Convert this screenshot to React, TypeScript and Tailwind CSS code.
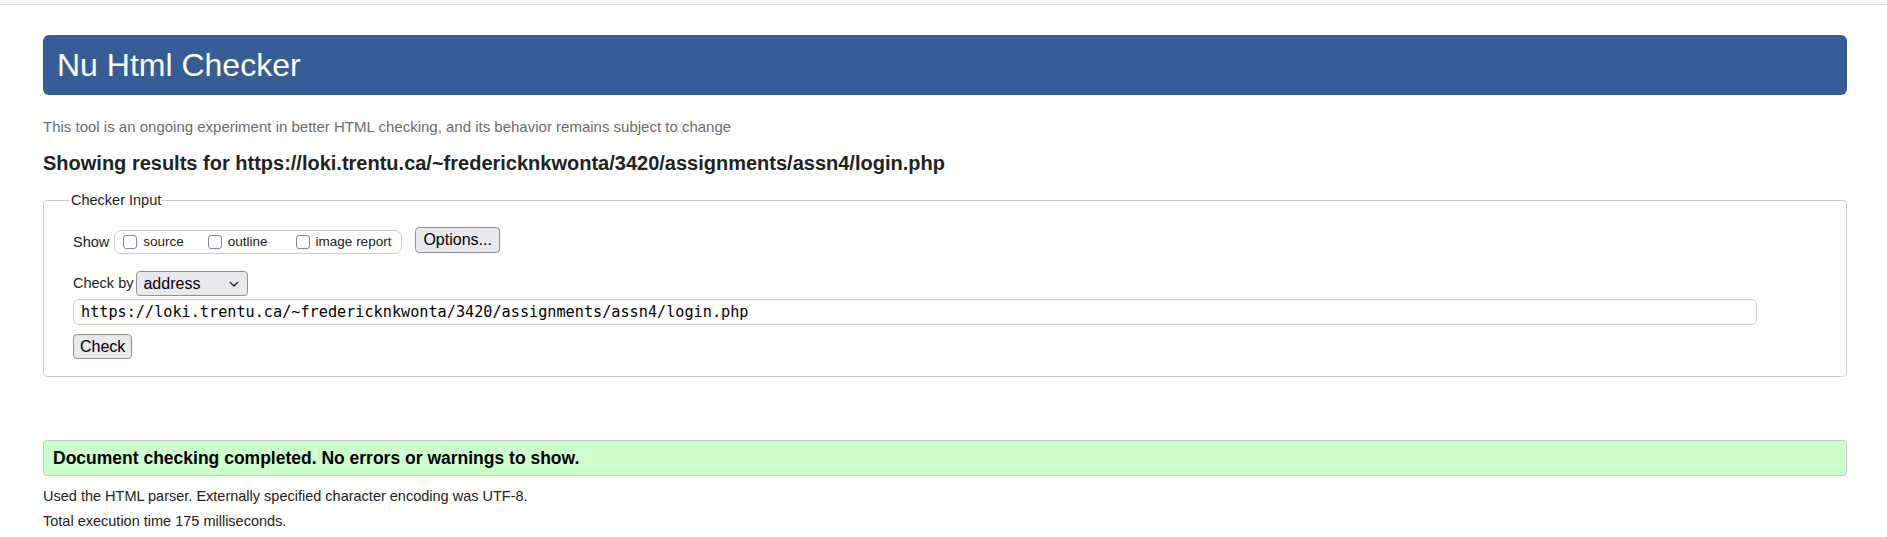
import React from 'react';

const url = 'https://loki.trentu.ca/~fredericknkwonta/3420/assignments/assn4/login.php';

const Checkbox = ({ label, className }: { label: string; className?: string }) => (
  <label className={`flex items-center ${className ?? ''}`}>
    <span className="w-[14px] h-[14px] rounded-[3px] border-[1.5px] border-[#85859a] bg-white" />
    <span className="ml-[6px] text-[13.5px] leading-[16px]">{label}</span>
  </label>
);

const App = () => {
  return (
    <div className="min-h-screen bg-white text-[#222] font-['Liberation_Sans',Arial,sans-serif]">
      {/* browser strip */}
      <div className="h-[5px] bg-[#f9f9fb] border-b border-[#d0d0d7]" />

      <div className="pl-[43px] pr-[40px]">
        {/* Header */}
        <div className="mt-[30px] h-[60px] rounded-[6px] bg-[#365d95] flex items-center pl-[14px]">
          <h1 className="text-[32px] leading-[38px] text-white">Nu Html Checker</h1>
        </div>

        <p className="mt-[22px] text-[15px] leading-[20px] text-[#6b6b6b]">
          This tool is an ongoing experiment in better HTML checking, and its behavior remains subject to change
        </p>

        <h2 className="mt-[14px] text-[20px] leading-[24px] font-bold">
          Showing results for {url}
        </h2>

        {/* Checker Input */}
        <fieldset className="mt-[15px] border border-[#ccc] rounded-[4px] pl-[29px] pb-[17px] text-[14.5px]">
          <legend className="ml-[-3px] px-[1px] leading-[20px] text-[14.5px]">Checker Input</legend>

          <div className="mt-[17px] flex items-start">
            <span className="mt-[3px] leading-[24px]">Show</span>
            <div className="ml-[5px] mt-[3px] h-[24px] flex items-center border border-[#ccc] rounded-[7px] pl-[8px] pr-[10px]">
              <Checkbox label="source" />
              <Checkbox label="outline" className="ml-[24px]" />
              <Checkbox label="image report" className="ml-[28px]" />
            </div>
            <button className="ml-[13px] h-[26px] px-[7px] rounded-[4px] border border-[#8f8f9d] bg-[#e9e9ed] text-[16px] leading-[20px] text-black">
              Options...
            </button>
          </div>

          <div className="mt-[17px] flex items-center h-[25px]">
            <span>Check by</span>
            <div className="ml-[3px] w-[112px] h-[25px] flex items-center rounded-[4px] border border-[#8f8f9d] bg-[#e9e9ed] pl-[6px] text-[16px] text-black">
              <span>address</span>
              <svg className="ml-auto mr-[8px]" width="10" height="6" viewBox="0 0 10 6" fill="none">
                <path d="M1 1l4 4 4-4" stroke="#222" strokeWidth="1.4" />
              </svg>
            </div>
          </div>

          <div className="mt-[3px] mr-[89px] h-[26px] flex items-center rounded-[6px] border border-[#ccc] pl-[7px] font-['DejaVu_Sans_Mono',monospace] text-[15.2px] text-black">
            {url}
          </div>

          <button className="mt-[9px] h-[25px] px-[6px] rounded-[4px] border border-[#8f8f9d] bg-[#e9e9ed] text-[16px] leading-[20px] text-black">
            Check
          </button>
        </fieldset>

        {/* Result */}
        <div className="mt-[63px] h-[36px] flex items-center rounded-[4px] border border-[#c8c8c8] bg-[#ccffcc] pl-[9px]">
          <p className="text-[17.5px] font-bold text-black">Document checking completed. No errors or warnings to show.</p>
        </div>

        <p className="mt-[8px] text-[14.5px] leading-[25px]">
          Used the HTML parser. Externally specified character encoding was UTF-8.
        </p>
        <p className="text-[14.5px] leading-[25px]">Total execution time 175 milliseconds.</p>
      </div>
    </div>
  );
};

export default App;
